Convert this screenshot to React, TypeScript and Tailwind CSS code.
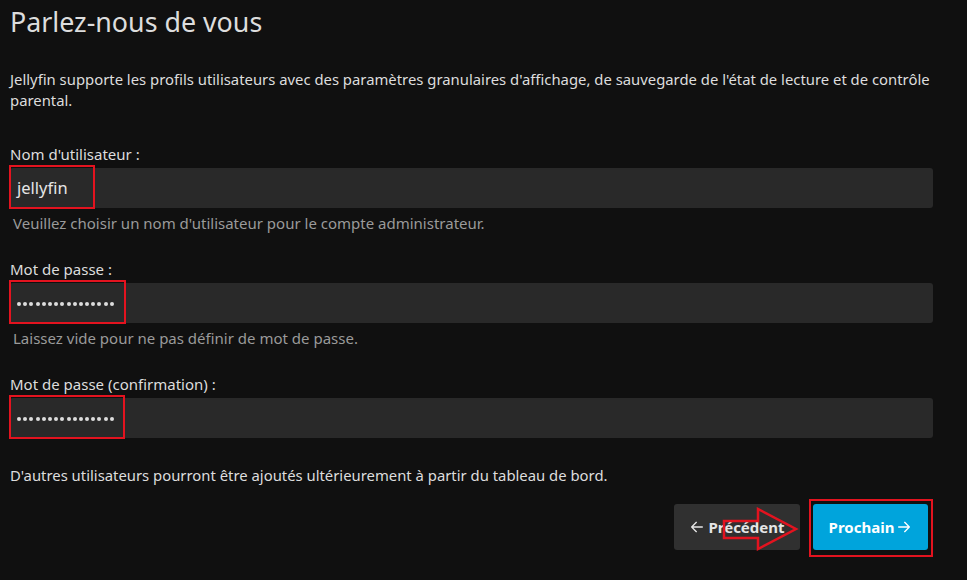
import React from "react";

function Field({ label, value, help, boxW, password }: { label: string; value: string; help?: string; boxW: number; password?: boolean }) {
  return (
    <div className="flex flex-col">
      <label className="text-[15px] leading-[20px] text-[#dddddd]">{label}</label>
      <div className="relative mt-[4px] h-[40px] w-[923px] rounded-[3px] bg-[#292929]">
        {password ? (
          <div className="flex h-full items-center gap-[2.2px] pl-[7px] pt-[1px]">
            {Array.from({ length: 16 }).map((_, i) => (
              <span key={i} className="h-[4px] w-[4px] rounded-full bg-[#dddddd]" />
            ))}
          </div>
        ) : (
          <div className="flex h-full items-center pl-[7px] text-[16.5px] text-[#e5e5e5]">{value}</div>
        )}
        <div
          className="absolute left-[-1px] top-[-3px] h-[44px] border-2 border-[#e3131f]"
          style={{ width: boxW }}
        />
      </div>
      {help && <div className="mt-[5px] pl-[3px] text-[15px] leading-[20px] text-[#9a9a9a]">{help}</div>}
    </div>
  );
}

export default function App() {
  return (
    <div className="h-[580px] w-[967px] overflow-hidden bg-[#101010] pl-[10px] text-[#dddddd]" style={{ fontFamily: '"Noto Sans", sans-serif' }}>
      <h1 className="pt-[0px] text-[26.8px] leading-[44px] text-[#dddddd]">Parlez-nous de vous</h1>
      <p className="mt-[25px] w-[940px] text-[14.85px] leading-[21px]">
        Jellyfin supporte les profils utilisateurs avec des paramètres granulaires d'affichage, de sauvegarde de l'état de lecture et de contrôle parental.
      </p>
      <div className="mt-[33px] flex flex-col gap-[26px]">
        <Field label="Nom d'utilisateur :" value="jellyfin" help="Veuillez choisir un nom d'utilisateur pour le compte administrateur." boxW={86} />
        <Field label="Mot de passe :" value="" password help="Laissez vide pour ne pas définir de mot de passe." boxW={117} />
        <Field label="Mot de passe (confirmation) :" value="" password boxW={116} />
      </div>
      <p className="mt-[27px] text-[14.85px] leading-[21px]">D'autres utilisateurs pourront être ajoutés ultérieurement à partir du tableau de bord.</p>
      <div className="mt-[18px] flex w-[923px] justify-end gap-[13px] pr-[5px]">
        <div className="relative">
          <button className="flex h-[46px] w-[126px] items-center justify-center gap-[3px] rounded-[3px] bg-[#303030] text-[15px] font-bold text-[#e5e5e5]">
            <svg width="16" height="16" viewBox="0 0 24 24" fill="none" stroke="currentColor" strokeWidth="2" strokeLinecap="round" strokeLinejoin="round"><path d="M20 12H4M11 19l-7-7 7-7" /></svg>
            Précédent
          </button>
          <svg className="absolute left-[48px] top-[3px]" width="78" height="44" viewBox="0 0 78 44">
            <path d="M2 14 H36 V2 L74 22 L36 42 V31 H2 Z" fill="none" stroke="#e3131f" strokeWidth="2.5" />
          </svg>
        </div>
        <div className="relative">
          <button className="flex h-[46px] w-[115px] items-center justify-center gap-[2px] rounded-[3px] bg-[#00a4dc] text-[15px] font-bold text-white">
            Prochain
            <svg width="16" height="16" viewBox="0 0 24 24" fill="none" stroke="currentColor" strokeWidth="2" strokeLinecap="round" strokeLinejoin="round"><path d="M4 12h16M13 5l7 7-7 7" /></svg>
          </button>
          <div className="absolute left-[-4px] top-[-5px] h-[58px] w-[124px] border-2 border-[#e3131f]" />
        </div>
      </div>
    </div>
  );
}
